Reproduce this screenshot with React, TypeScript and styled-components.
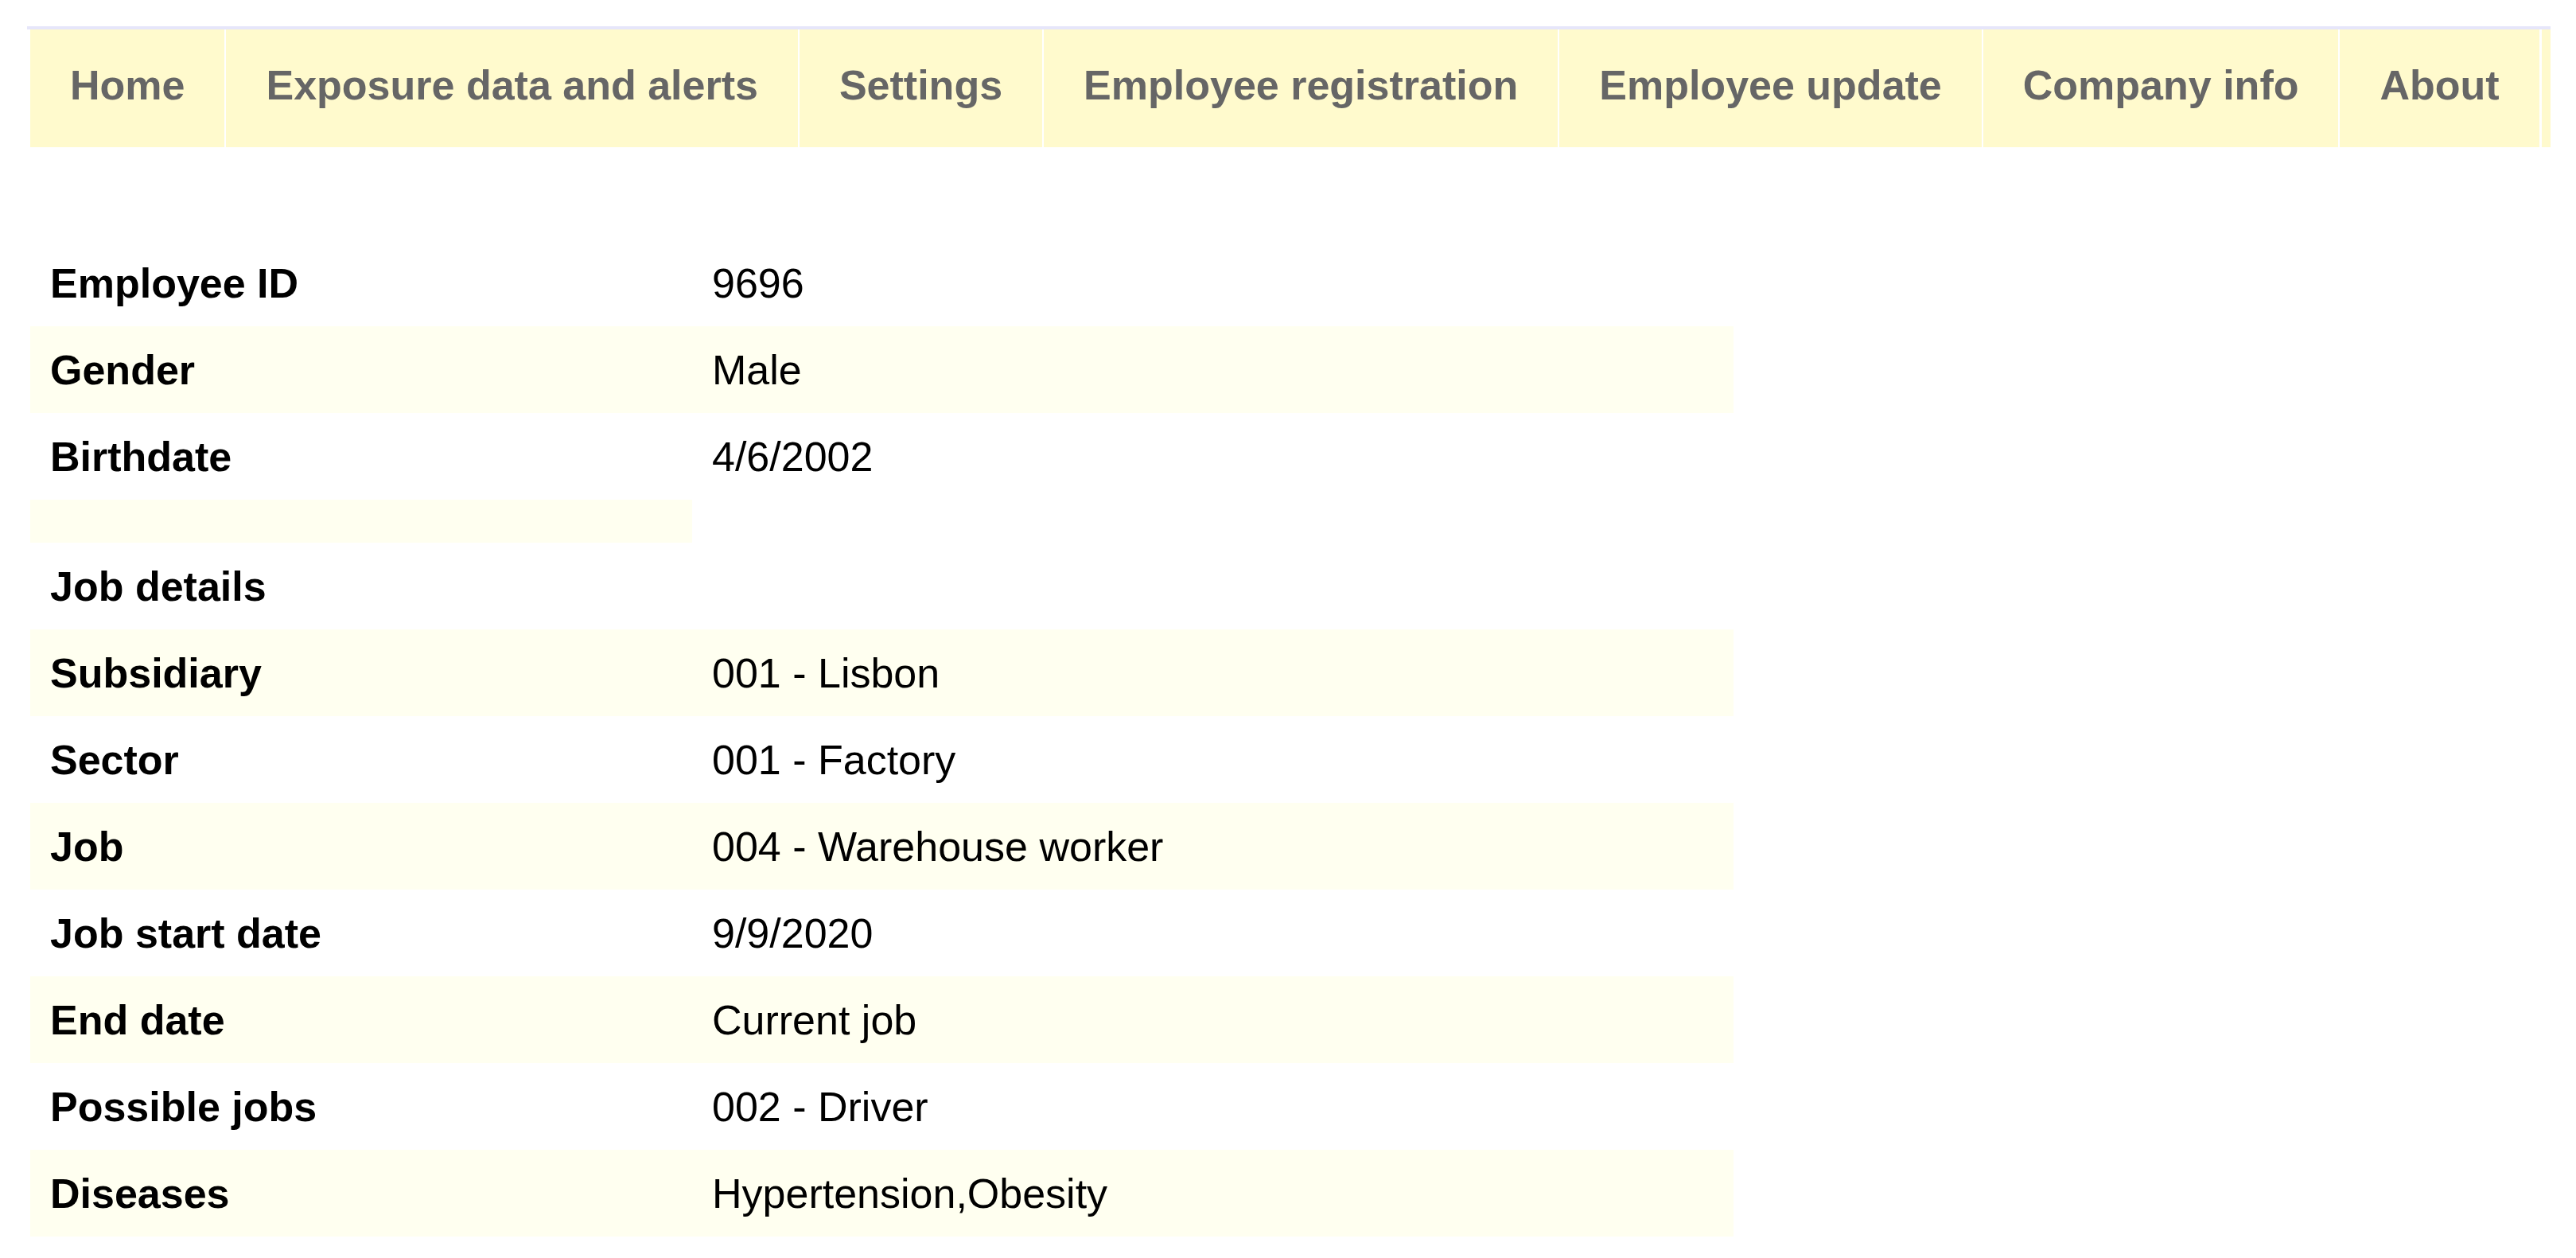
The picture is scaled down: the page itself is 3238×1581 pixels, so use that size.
import React from "react";
import styled, { createGlobalStyle } from "styled-components";

const GlobalStyle = createGlobalStyle`
  html, body {
    margin: 0;
    padding: 0;
    background: #ffffff;
    font-family: "Liberation Sans", Arial, sans-serif;
  }
`;

const Page = styled.div`
  padding: 33px 0 0 34px;
`;

const NavBar = styled.nav`
  display: flex;
  width: 3172px;
  border-top: 4px solid #e6e6fa;
  padding-left: 4px;
  box-sizing: border-box;
  gap: 2px;
  background: #ffffff;
`;

const NavItem = styled.a`
  display: block;
  background: #fffacd;
  color: #666666;
  font-weight: bold;
  font-size: 52px;
  line-height: 60px;
  padding: 40px 50px 48px;
  text-decoration: none;
  white-space: nowrap;
  cursor: pointer;
`;

const NavFiller = styled.div`
  flex: 1;
  margin-left: 1px;
  background: #fffacd;
`;

const InfoTable = styled.div`
  margin: 116px 0 0 4px;
  width: 2141px;
  display: flex;
  flex-direction: column;
`;

const Row = styled.div<{ $short?: boolean }>`
  display: grid;
  grid-template-columns: 832px 1309px;
  height: ${(p) => (p.$short ? "54px" : "109px")};
`;

const Cell = styled.div<{ $shade?: boolean; $bold?: boolean }>`
  display: flex;
  align-items: center;
  padding: 0 25px;
  background: ${(p) => (p.$shade ? "#fffff0" : "transparent")};
  color: #000000;
  font-size: 52px;
  line-height: 60px;
  font-weight: ${(p) => (p.$bold ? "bold" : "normal")};
  white-space: nowrap;
`;

const navItems = [
  "Home",
  "Exposure data and alerts",
  "Settings",
  "Employee registration",
  "Employee update",
  "Company info",
  "About",
];

type RowData = { label: string; value?: string; short?: boolean; labelOnly?: boolean };

const rows: RowData[] = [
  { label: "Employee ID", value: "9696" },
  { label: "Gender", value: "Male" },
  { label: "Birthdate", value: "4/6/2002" },
  { label: "", short: true, labelOnly: true },
  { label: "Job details", value: "" },
  { label: "Subsidiary", value: "001 - Lisbon" },
  { label: "Sector", value: "001 - Factory" },
  { label: "Job", value: "004 - Warehouse worker" },
  { label: "Job start date", value: "9/9/2020" },
  { label: "End date", value: "Current job" },
  { label: "Possible jobs", value: "002 - Driver" },
  { label: "Diseases", value: "Hypertension,Obesity" },
];

export default function App() {
  return (
    <>
      <GlobalStyle />
      <Page>
        <NavBar>
          {navItems.map((n) => (
            <NavItem key={n}>{n}</NavItem>
          ))}
          <NavFiller />
        </NavBar>
        <InfoTable>
          {rows.map((r, i) => {
            const shade = i % 2 === 1;
            return (
              <Row key={i} $short={r.short}>
                <Cell $shade={shade} $bold>
                  {r.label}
                </Cell>
                {r.labelOnly ? <div /> : <Cell $shade={shade}>{r.value}</Cell>}
              </Row>
            );
          })}
        </InfoTable>
      </Page>
    </>
  );
}
